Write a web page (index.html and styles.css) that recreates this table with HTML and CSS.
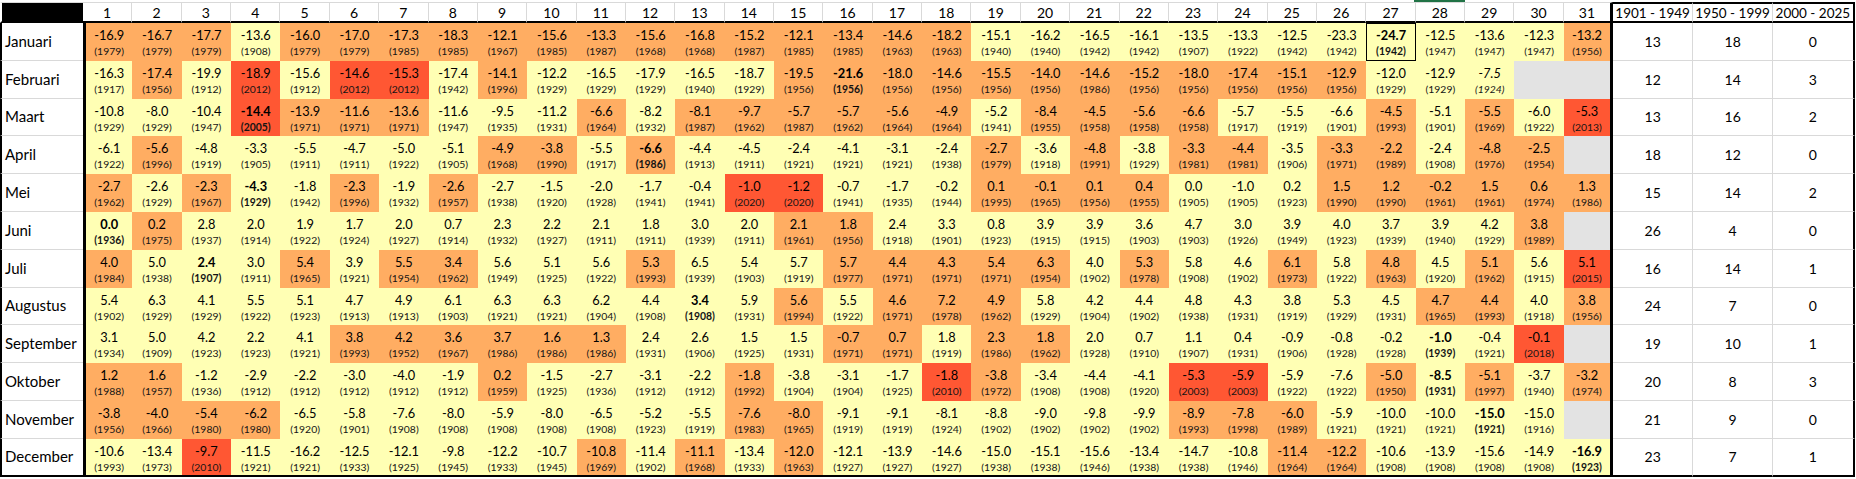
FILE: index.html
```html
<!DOCTYPE html>
<html lang="nl">
<head>
<meta charset="utf-8">
<title>Koudste dagen per kalenderdag</title>
<link rel="stylesheet" href="styles.css">
</head>
<body>
<div class="sheet">
<div class="sel"></div>
<div class="grid">
<div class="h"><div></div><div>1</div><div>2</div><div>3</div><div>4</div><div>5</div><div>6</div><div>7</div><div>8</div><div>9</div><div>10</div><div>11</div><div>12</div><div>13</div><div>14</div><div>15</div><div>16</div><div>17</div><div>18</div><div>19</div><div>20</div><div>21</div><div>22</div><div>23</div><div>24</div><div>25</div><div>26</div><div>27</div><div>28</div><div>29</div><div>30</div><div>31</div><div>1901 - 1949</div><div>1950 - 1999</div><div>2000 - 2025</div></div>

<div class="r"><div>Januari</div><div class="o">-16.9<small>(1979)</small></div><div class="o">-16.7<small>(1979)</small></div><div class="o">-17.7<small>(1979)</small></div><div class="y">-13.6<small>(1908)</small></div><div class="o">-16.0<small>(1979)</small></div><div class="o">-17.0<small>(1979)</small></div><div class="o">-17.3<small>(1985)</small></div><div class="o">-18.3<small>(1985)</small></div><div class="o">-12.1<small>(1967)</small></div><div class="o">-15.6<small>(1985)</small></div><div class="o">-13.3<small>(1987)</small></div><div class="o">-15.6<small>(1968)</small></div><div class="o">-16.8<small>(1968)</small></div><div class="o">-15.2<small>(1987)</small></div><div class="o">-12.1<small>(1985)</small></div><div class="o">-13.4<small>(1985)</small></div><div class="o">-14.6<small>(1963)</small></div><div class="o">-18.2<small>(1963)</small></div><div class="y">-15.1<small>(1940)</small></div><div class="y">-16.2<small>(1940)</small></div><div class="y">-16.5<small>(1942)</small></div><div class="y">-16.1<small>(1942)</small></div><div class="y">-13.5<small>(1907)</small></div><div class="y">-13.3<small>(1922)</small></div><div class="y">-12.5<small>(1942)</small></div><div class="y">-23.3<small>(1942)</small></div><div class="y b x">-24.7<small>(1942)</small></div><div class="y">-12.5<small>(1947)</small></div><div class="y">-13.6<small>(1947)</small></div><div class="y">-12.3<small>(1947)</small></div><div class="o">-13.2<small>(1956)</small></div><div>13</div><div>18</div><div>0</div></div>

<div class="r"><div>Februari</div><div class="y">-16.3<small>(1917)</small></div><div class="o">-17.4<small>(1956)</small></div><div class="y">-19.9<small>(1912)</small></div><div class="red">-18.9<small>(2012)</small></div><div class="y">-15.6<small>(1912)</small></div><div class="red">-14.6<small>(2012)</small></div><div class="red">-15.3<small>(2012)</small></div><div class="y">-17.4<small>(1942)</small></div><div class="o">-14.1<small>(1996)</small></div><div class="y">-12.2<small>(1929)</small></div><div class="y">-16.5<small>(1929)</small></div><div class="y">-17.9<small>(1929)</small></div><div class="y">-16.5<small>(1940)</small></div><div class="y">-18.7<small>(1929)</small></div><div class="o">-19.5<small>(1956)</small></div><div class="o b">-21.6<small>(1956)</small></div><div class="o">-18.0<small>(1956)</small></div><div class="o">-14.6<small>(1956)</small></div><div class="o">-15.5<small>(1956)</small></div><div class="o">-14.0<small>(1956)</small></div><div class="o">-14.6<small>(1986)</small></div><div class="o">-15.2<small>(1956)</small></div><div class="o">-18.0<small>(1956)</small></div><div class="o">-17.4<small>(1956)</small></div><div class="o">-15.1<small>(1956)</small></div><div class="o">-12.9<small>(1956)</small></div><div class="y">-12.0<small>(1929)</small></div><div class="y">-12.9<small>(1929)</small></div><div class="y it">-7.5<small>(1924)</small></div><div class="g"></div><div class="g"></div><div>12</div><div>14</div><div>3</div></div>

<div class="r"><div>Maart</div><div class="y">-10.8<small>(1929)</small></div><div class="y">-8.0<small>(1929)</small></div><div class="y">-10.4<small>(1947)</small></div><div class="red b">-14.4<small>(2005)</small></div><div class="o">-13.9<small>(1971)</small></div><div class="o">-11.6<small>(1971)</small></div><div class="o">-13.6<small>(1971)</small></div><div class="y">-11.6<small>(1947)</small></div><div class="y">-9.5<small>(1935)</small></div><div class="y">-11.2<small>(1931)</small></div><div class="o">-6.6<small>(1964)</small></div><div class="y">-8.2<small>(1932)</small></div><div class="o">-8.1<small>(1987)</small></div><div class="o">-9.7<small>(1962)</small></div><div class="o">-5.7<small>(1987)</small></div><div class="o">-5.7<small>(1962)</small></div><div class="o">-5.6<small>(1964)</small></div><div class="o">-4.9<small>(1964)</small></div><div class="y">-5.2<small>(1941)</small></div><div class="o">-8.4<small>(1955)</small></div><div class="o">-4.5<small>(1958)</small></div><div class="o">-5.6<small>(1958)</small></div><div class="o">-6.6<small>(1958)</small></div><div class="y">-5.7<small>(1917)</small></div><div class="y">-5.5<small>(1919)</small></div><div class="y">-6.6<small>(1901)</small></div><div class="o">-4.5<small>(1993)</small></div><div class="y">-5.1<small>(1901)</small></div><div class="o">-5.5<small>(1969)</small></div><div class="y">-6.0<small>(1922)</small></div><div class="red">-5.3<small>(2013)</small></div><div>13</div><div>16</div><div>2</div></div>

<div class="r"><div>April</div><div class="y">-6.1<small>(1922)</small></div><div class="o">-5.6<small>(1996)</small></div><div class="y">-4.8<small>(1919)</small></div><div class="y">-3.3<small>(1905)</small></div><div class="y">-5.5<small>(1911)</small></div><div class="y">-4.7<small>(1911)</small></div><div class="y">-5.0<small>(1922)</small></div><div class="y">-5.1<small>(1905)</small></div><div class="o">-4.9<small>(1968)</small></div><div class="o">-3.8<small>(1990)</small></div><div class="y">-5.5<small>(1917)</small></div><div class="o b">-6.6<small>(1986)</small></div><div class="y">-4.4<small>(1913)</small></div><div class="y">-4.5<small>(1911)</small></div><div class="y">-2.4<small>(1921)</small></div><div class="y">-4.1<small>(1921)</small></div><div class="y">-3.1<small>(1921)</small></div><div class="y">-2.4<small>(1938)</small></div><div class="o">-2.7<small>(1979)</small></div><div class="y">-3.6<small>(1918)</small></div><div class="o">-4.8<small>(1991)</small></div><div class="y">-3.8<small>(1929)</small></div><div class="o">-3.3<small>(1981)</small></div><div class="o">-4.4<small>(1981)</small></div><div class="y">-3.5<small>(1906)</small></div><div class="o">-3.3<small>(1971)</small></div><div class="o">-2.2<small>(1989)</small></div><div class="y">-2.4<small>(1908)</small></div><div class="o">-4.8<small>(1976)</small></div><div class="o">-2.5<small>(1954)</small></div><div class="g"></div><div>18</div><div>12</div><div>0</div></div>

<div class="r"><div>Mei</div><div class="o">-2.7<small>(1962)</small></div><div class="y">-2.6<small>(1929)</small></div><div class="o">-2.3<small>(1967)</small></div><div class="y b">-4.3<small>(1929)</small></div><div class="y">-1.8<small>(1942)</small></div><div class="o">-2.3<small>(1996)</small></div><div class="y">-1.9<small>(1932)</small></div><div class="o">-2.6<small>(1957)</small></div><div class="y">-2.7<small>(1938)</small></div><div class="y">-1.5<small>(1920)</small></div><div class="y">-2.0<small>(1928)</small></div><div class="y">-1.7<small>(1941)</small></div><div class="y">-0.4<small>(1941)</small></div><div class="red">-1.0<small>(2020)</small></div><div class="red">-1.2<small>(2020)</small></div><div class="y">-0.7<small>(1941)</small></div><div class="y">-1.7<small>(1935)</small></div><div class="y">-0.2<small>(1944)</small></div><div class="o">0.1<small>(1995)</small></div><div class="o">-0.1<small>(1965)</small></div><div class="o">0.1<small>(1956)</small></div><div class="o">0.4<small>(1955)</small></div><div class="y">0.0<small>(1905)</small></div><div class="y">-1.0<small>(1905)</small></div><div class="y">0.2<small>(1923)</small></div><div class="o">1.5<small>(1990)</small></div><div class="o">1.2<small>(1990)</small></div><div class="o">-0.2<small>(1961)</small></div><div class="o">1.5<small>(1961)</small></div><div class="o">0.6<small>(1974)</small></div><div class="o">1.3<small>(1986)</small></div><div>15</div><div>14</div><div>2</div></div>

<div class="r"><div>Juni</div><div class="y b">0.0<small>(1936)</small></div><div class="o">0.2<small>(1975)</small></div><div class="y">2.8<small>(1937)</small></div><div class="y">2.0<small>(1914)</small></div><div class="y">1.9<small>(1922)</small></div><div class="y">1.7<small>(1924)</small></div><div class="y">2.0<small>(1927)</small></div><div class="y">0.7<small>(1914)</small></div><div class="y">2.3<small>(1932)</small></div><div class="y">2.2<small>(1927)</small></div><div class="y">2.1<small>(1911)</small></div><div class="y">1.8<small>(1911)</small></div><div class="y">3.0<small>(1939)</small></div><div class="y">2.0<small>(1911)</small></div><div class="o">2.1<small>(1961)</small></div><div class="o">1.8<small>(1956)</small></div><div class="y">2.4<small>(1918)</small></div><div class="y">3.3<small>(1901)</small></div><div class="y">0.8<small>(1923)</small></div><div class="y">3.9<small>(1915)</small></div><div class="y">3.9<small>(1915)</small></div><div class="y">3.6<small>(1903)</small></div><div class="y">4.7<small>(1903)</small></div><div class="y">3.0<small>(1926)</small></div><div class="y">3.9<small>(1949)</small></div><div class="y">4.0<small>(1923)</small></div><div class="y">3.7<small>(1939)</small></div><div class="y">3.9<small>(1940)</small></div><div class="y">4.2<small>(1929)</small></div><div class="o">3.8<small>(1989)</small></div><div class="g"></div><div>26</div><div>4</div><div>0</div></div>

<div class="r"><div>Juli</div><div class="o">4.0<small>(1984)</small></div><div class="y">5.0<small>(1938)</small></div><div class="y b">2.4<small>(1907)</small></div><div class="y">3.0<small>(1911)</small></div><div class="o">5.4<small>(1965)</small></div><div class="y">3.9<small>(1921)</small></div><div class="o">5.5<small>(1954)</small></div><div class="o">3.4<small>(1962)</small></div><div class="y">5.6<small>(1949)</small></div><div class="y">5.1<small>(1925)</small></div><div class="y">5.6<small>(1922)</small></div><div class="o">5.3<small>(1993)</small></div><div class="y">6.5<small>(1939)</small></div><div class="y">5.4<small>(1903)</small></div><div class="y">5.7<small>(1919)</small></div><div class="o">5.7<small>(1977)</small></div><div class="o">4.4<small>(1971)</small></div><div class="o">4.3<small>(1971)</small></div><div class="o">5.4<small>(1971)</small></div><div class="o">6.3<small>(1954)</small></div><div class="y">4.0<small>(1902)</small></div><div class="o">5.3<small>(1978)</small></div><div class="y">5.8<small>(1908)</small></div><div class="y">4.6<small>(1902)</small></div><div class="o">6.1<small>(1973)</small></div><div class="y">5.8<small>(1922)</small></div><div class="o">4.8<small>(1963)</small></div><div class="y">4.5<small>(1920)</small></div><div class="o">5.1<small>(1962)</small></div><div class="y">5.6<small>(1915)</small></div><div class="red">5.1<small>(2015)</small></div><div>16</div><div>14</div><div>1</div></div>

<div class="r"><div>Augustus</div><div class="y">5.4<small>(1902)</small></div><div class="y">6.3<small>(1929)</small></div><div class="y">4.1<small>(1929)</small></div><div class="y">5.5<small>(1922)</small></div><div class="y">5.1<small>(1923)</small></div><div class="y">4.7<small>(1913)</small></div><div class="y">4.9<small>(1913)</small></div><div class="y">6.1<small>(1903)</small></div><div class="y">6.3<small>(1921)</small></div><div class="y">6.3<small>(1921)</small></div><div class="y">6.2<small>(1904)</small></div><div class="y">4.4<small>(1908)</small></div><div class="y b">3.4<small>(1908)</small></div><div class="y">5.9<small>(1931)</small></div><div class="o">5.6<small>(1994)</small></div><div class="y">5.5<small>(1922)</small></div><div class="o">4.6<small>(1971)</small></div><div class="o">7.2<small>(1978)</small></div><div class="o">4.9<small>(1962)</small></div><div class="y">5.8<small>(1929)</small></div><div class="y">4.2<small>(1904)</small></div><div class="y">4.4<small>(1902)</small></div><div class="y">4.8<small>(1938)</small></div><div class="y">4.3<small>(1931)</small></div><div class="y">3.8<small>(1919)</small></div><div class="y">5.3<small>(1929)</small></div><div class="y">4.5<small>(1931)</small></div><div class="o">4.7<small>(1965)</small></div><div class="o">4.4<small>(1993)</small></div><div class="y">4.0<small>(1918)</small></div><div class="o">3.8<small>(1956)</small></div><div>24</div><div>7</div><div>0</div></div>

<div class="r"><div>September</div><div class="y">3.1<small>(1934)</small></div><div class="y">5.0<small>(1909)</small></div><div class="y">4.2<small>(1923)</small></div><div class="y">2.2<small>(1923)</small></div><div class="y">4.1<small>(1921)</small></div><div class="o">3.8<small>(1993)</small></div><div class="o">4.2<small>(1952)</small></div><div class="o">3.6<small>(1967)</small></div><div class="o">3.7<small>(1986)</small></div><div class="o">1.6<small>(1986)</small></div><div class="o">1.3<small>(1986)</small></div><div class="y">2.4<small>(1931)</small></div><div class="y">2.6<small>(1906)</small></div><div class="y">1.5<small>(1925)</small></div><div class="y">1.5<small>(1931)</small></div><div class="o">-0.7<small>(1971)</small></div><div class="o">0.7<small>(1971)</small></div><div class="y">1.8<small>(1919)</small></div><div class="o">2.3<small>(1986)</small></div><div class="o">1.8<small>(1962)</small></div><div class="y">2.0<small>(1928)</small></div><div class="y">0.7<small>(1910)</small></div><div class="y">1.1<small>(1907)</small></div><div class="y">0.4<small>(1931)</small></div><div class="y">-0.9<small>(1906)</small></div><div class="y">-0.8<small>(1928)</small></div><div class="y">-0.2<small>(1928)</small></div><div class="y b">-1.0<small>(1939)</small></div><div class="y">-0.4<small>(1921)</small></div><div class="red">-0.1<small>(2018)</small></div><div class="g"></div><div>19</div><div>10</div><div>1</div></div>

<div class="r"><div>Oktober</div><div class="o">1.2<small>(1988)</small></div><div class="o">1.6<small>(1957)</small></div><div class="y">-1.2<small>(1936)</small></div><div class="y">-2.9<small>(1912)</small></div><div class="y">-2.2<small>(1912)</small></div><div class="y">-3.0<small>(1912)</small></div><div class="y">-4.0<small>(1912)</small></div><div class="y">-1.9<small>(1912)</small></div><div class="o">0.2<small>(1959)</small></div><div class="y">-1.5<small>(1925)</small></div><div class="y">-2.7<small>(1936)</small></div><div class="y">-3.1<small>(1912)</small></div><div class="y">-2.2<small>(1912)</small></div><div class="o">-1.8<small>(1992)</small></div><div class="y">-3.8<small>(1904)</small></div><div class="y">-3.1<small>(1904)</small></div><div class="y">-1.7<small>(1925)</small></div><div class="red">-1.8<small>(2010)</small></div><div class="o">-3.8<small>(1972)</small></div><div class="y">-3.4<small>(1908)</small></div><div class="y">-4.4<small>(1908)</small></div><div class="y">-4.1<small>(1920)</small></div><div class="red">-5.3<small>(2003)</small></div><div class="red">-5.9<small>(2003)</small></div><div class="y">-5.9<small>(1922)</small></div><div class="y">-7.6<small>(1922)</small></div><div class="o">-5.0<small>(1950)</small></div><div class="y b">-8.5<small>(1931)</small></div><div class="o">-5.1<small>(1997)</small></div><div class="y">-3.7<small>(1940)</small></div><div class="o">-3.2<small>(1974)</small></div><div>20</div><div>8</div><div>3</div></div>

<div class="r"><div>November</div><div class="o">-3.8<small>(1956)</small></div><div class="o">-4.0<small>(1966)</small></div><div class="o">-5.4<small>(1980)</small></div><div class="o">-6.2<small>(1980)</small></div><div class="y">-6.5<small>(1920)</small></div><div class="y">-5.8<small>(1901)</small></div><div class="y">-7.6<small>(1908)</small></div><div class="y">-8.0<small>(1908)</small></div><div class="y">-5.9<small>(1908)</small></div><div class="y">-8.0<small>(1908)</small></div><div class="y">-6.5<small>(1908)</small></div><div class="y">-5.2<small>(1923)</small></div><div class="y">-5.5<small>(1919)</small></div><div class="o">-7.6<small>(1983)</small></div><div class="o">-8.0<small>(1965)</small></div><div class="y">-9.1<small>(1919)</small></div><div class="y">-9.1<small>(1919)</small></div><div class="y">-8.1<small>(1924)</small></div><div class="y">-8.8<small>(1902)</small></div><div class="y">-9.0<small>(1902)</small></div><div class="y">-9.8<small>(1902)</small></div><div class="y">-9.9<small>(1902)</small></div><div class="o">-8.9<small>(1993)</small></div><div class="o">-7.8<small>(1998)</small></div><div class="o">-6.0<small>(1989)</small></div><div class="y">-5.9<small>(1921)</small></div><div class="y">-10.0<small>(1921)</small></div><div class="y">-10.0<small>(1921)</small></div><div class="y b">-15.0<small>(1921)</small></div><div class="y">-15.0<small>(1916)</small></div><div class="g"></div><div>21</div><div>9</div><div>0</div></div>

<div class="r"><div>December</div><div class="y">-10.6<small>(1993)</small></div><div class="y">-13.4<small>(1973)</small></div><div class="red">-9.7<small>(2010)</small></div><div class="y">-11.5<small>(1921)</small></div><div class="y">-16.2<small>(1921)</small></div><div class="y">-12.5<small>(1933)</small></div><div class="y">-12.1<small>(1925)</small></div><div class="y">-9.8<small>(1945)</small></div><div class="y">-12.2<small>(1933)</small></div><div class="y">-10.7<small>(1945)</small></div><div class="o">-10.8<small>(1969)</small></div><div class="y">-11.4<small>(1902)</small></div><div class="o">-11.1<small>(1968)</small></div><div class="y">-13.4<small>(1933)</small></div><div class="o">-12.0<small>(1963)</small></div><div class="y">-12.1<small>(1927)</small></div><div class="y">-13.9<small>(1927)</small></div><div class="y">-14.6<small>(1927)</small></div><div class="y">-15.0<small>(1938)</small></div><div class="y">-15.1<small>(1938)</small></div><div class="y">-15.6<small>(1946)</small></div><div class="y">-13.4<small>(1938)</small></div><div class="y">-14.7<small>(1938)</small></div><div class="y">-10.8<small>(1946)</small></div><div class="o">-11.4<small>(1964)</small></div><div class="o">-12.2<small>(1964)</small></div><div class="y">-10.6<small>(1908)</small></div><div class="y">-13.9<small>(1908)</small></div><div class="y">-15.6<small>(1908)</small></div><div class="y">-14.9<small>(1908)</small></div><div class="y b">-16.9<small>(1923)</small></div><div>23</div><div>7</div><div>1</div></div>
</div>
</div>
</body>
</html>
```

FILE: styles.css
```css
* { box-sizing: border-box; }

body {
  margin: 0;
  background: #ffffff;
  color: #000000;
  font-family: Lato, "Open Sans", "Liberation Sans", sans-serif;
}

.sheet {
  position: relative;
  width: 1856px;
  padding-top: 2px;
}

.sel {
  position: absolute;
  top: 0;
  left: 1414px;
  width: 51px;
  height: 2px;
  background: #217346;
}

.grid {
  display: grid;
  grid-template-columns: 83px repeat(31, 49.37px) 80px 80px 81.5px;
  grid-template-rows: 21px repeat(12, 37.8px);
}

.h, .r { display: contents; }

/* header row */
.h > div {
  display: flex;
  align-items: center;
  justify-content: center;
  background: #ffffff;
  border-top: 1px solid #d9d9d9;
  border-right: 1px solid #d9d9d9;
  border-bottom: 2px solid #000000;
  font-size: 14px;
  white-space: nowrap;
}
.h > div:first-child {
  background: #000000;
  border-left: 2px solid #ffffff;
  border-right: none;
}
.h > div:nth-child(32) { border-right: 3px solid #000000; }
.h > div:nth-child(n+33) { border-top: 2px solid #000000; font-size: 13.5px; }
.h > div:last-child { border-right: 2px solid #000000; }

/* data cells */
.r > div {
  text-align: center;
  font-size: 12.8px;
  line-height: 17px;
  padding-top: 4px;
  white-space: nowrap;
}
.r > div small {
  display: block;
  font-size: 10.4px;
  line-height: 15px;
  color: #141414;
}

.y { background: #ffffb4; }
.o { background: #ffad62; }
.red { background: #ff5733; }
.g { background: #e3e3e3; }
.b { font-weight: 700; }
.b small { font-weight: 700; }
.it { font-style: italic; }
.x { box-shadow: inset 0 0 0 1px #000000; }

/* month labels */
.r > div:first-child {
  display: flex;
  align-items: center;
  padding: 0 0 0 3px;
  background: #ffffff;
  border-left: 2px solid #000000;
  border-bottom: 1px solid #d9d9d9;
  text-align: left;
  font-size: 15px;
  line-height: 1;
}

.r > div:nth-child(2) { border-left: 3px solid #000000; }
.r > div:nth-child(32) { border-right: 3px solid #000000; }

/* period counts */
.r > div:nth-child(n+33) {
  display: flex;
  align-items: center;
  justify-content: center;
  padding: 0;
  background: #ffffff;
  border-right: 1px solid #d9d9d9;
  border-bottom: 1px solid #d9d9d9;
  font-size: 14px;
}
.r > div:last-child { border-right: 2px solid #000000; }

.r:last-child > div { border-bottom: 2px solid #000000; }
```
